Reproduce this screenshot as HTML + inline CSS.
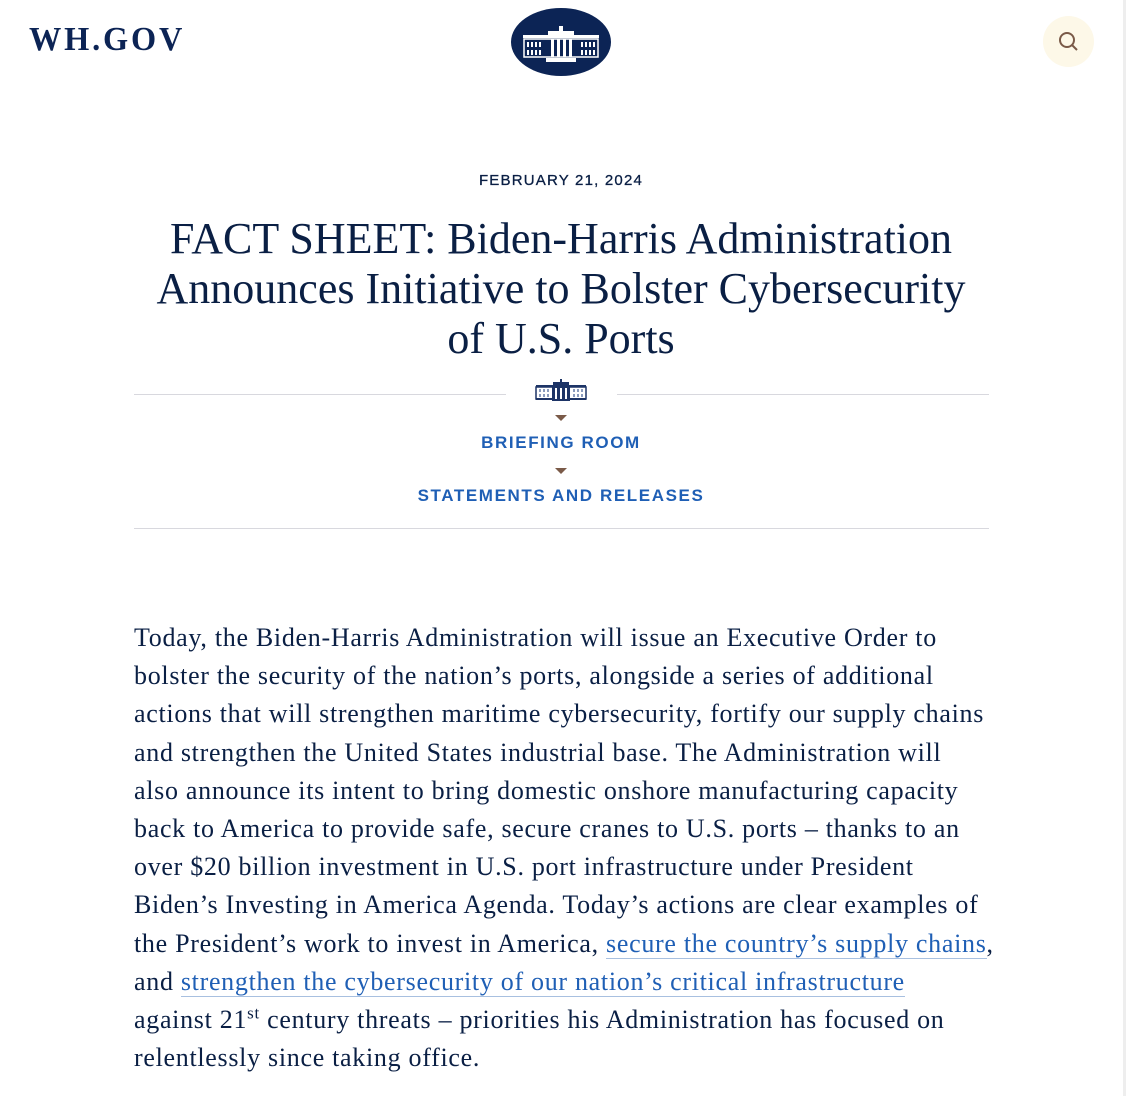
<!DOCTYPE html>
<html><head><meta charset="utf-8"><style>
body{margin:0;width:1126px;height:1096px;background:#fff;overflow:hidden;position:relative;font-family:"Liberation Serif",serif;color:#0a1f44}
.sb{position:absolute;right:0;top:0;width:3px;height:1096px;background:#eee}
.logo{position:absolute;left:29px;top:21px;font-size:34px;font-weight:bold;letter-spacing:3px;color:#0c2455;transform:scaleX(0.95);transform-origin:left}
.seal{position:absolute;left:511px;top:8px;width:100px;height:68px;border-radius:50%;background:#0c2455}
.search{position:absolute;left:1043px;top:16px;width:51px;height:51px;border-radius:50%;background:#fdf8e8}
.date{position:absolute;top:172px;left:0;width:1122px;text-align:center;font-family:"Liberation Sans",sans-serif;font-size:15px;letter-spacing:1.2px;color:#0a1f44;-webkit-text-stroke:.3px #0a1f44}
h1{position:absolute;top:214px;left:60px;width:1002px;margin:0;text-align:center;font-weight:normal;font-size:44px;line-height:50px;color:#0a1f44}
.line{position:absolute;height:1px;background:#d8d8de}
.tri{position:absolute;left:555px;width:0;height:0;border-left:6px solid transparent;border-right:6px solid transparent;border-top:6px solid #7a5a48}
.cat{position:absolute;left:0;width:1122px;text-align:center;font-family:"Liberation Sans",sans-serif;font-size:17px;font-weight:bold;letter-spacing:1.6px;color:#1f5fb5}
.body{position:absolute;left:134px;top:619px;font-size:26px;line-height:38.2px;letter-spacing:.7px;color:#0a1f44;white-space:nowrap}
a{color:#1f5fb5;text-decoration:none;border-bottom:1px solid #a8c0e0}
sup{font-size:17px;line-height:0}
</style></head><body>
<div class="sb"></div>
<div class="logo">WH.GOV</div>
<div class="seal"><svg width="100" height="68" viewBox="0 0 100 68"><g fill="#fff"><rect x="12" y="27" width="76" height="3"/><rect x="13" y="31" width="74" height="18" fill="none" stroke="#fff" stroke-width="1.5"/><rect x="37" y="23" width="26" height="6"/><rect x="48" y="18" width="4" height="6"/><rect x="35" y="50" width="30" height="4"/><g fill="#fff"><rect x="16" y="34" width="2" height="5"/><rect x="20" y="34" width="2" height="5"/><rect x="24" y="34" width="2" height="5"/><rect x="28" y="34" width="2" height="5"/><rect x="16" y="42" width="2" height="5"/><rect x="20" y="42" width="2" height="5"/><rect x="24" y="42" width="2" height="5"/><rect x="28" y="42" width="2" height="5"/><rect x="70" y="34" width="2" height="5"/><rect x="74" y="34" width="2" height="5"/><rect x="78" y="34" width="2" height="5"/><rect x="82" y="34" width="2" height="5"/><rect x="70" y="42" width="2" height="5"/><rect x="74" y="42" width="2" height="5"/><rect x="78" y="42" width="2" height="5"/><rect x="82" y="42" width="2" height="5"/><rect x="40" y="31" width="3" height="18"/><rect x="46" y="31" width="3" height="18"/><rect x="52" y="31" width="3" height="18"/><rect x="58" y="31" width="3" height="18"/></g></g></svg></div>
<div class="search"><svg width="51" height="51" viewBox="0 0 51 51"><circle cx="24" cy="24" r="7" fill="none" stroke="#7a5a48" stroke-width="2"/><line x1="29" y1="29" x2="34" y2="34" stroke="#7a5a48" stroke-width="2"/></svg></div>
<div class="date">FEBRUARY 21, 2024</div>
<h1>FACT SHEET: Biden-Harris Administration<br>Announces Initiative to Bolster Cybersecurity<br>of U.S. Ports</h1>
<div class="line" style="left:134px;width:372px;top:394px"></div>
<div class="line" style="left:617px;width:372px;top:394px"></div>
<svg style="position:absolute;left:535px;top:378px" width="52" height="24" viewBox="0 0 52 24"><g fill="#1d3466"><rect x="1" y="7" width="50" height="2"/><rect x="1" y="9" width="50" height="12" fill="none" stroke="#1d3466" stroke-width="1.5"/><rect x="18" y="4" width="16" height="4"/><rect x="25" y="1" width="2" height="4"/><rect x="17" y="9" width="18" height="14"/><rect x="1" y="20" width="50" height="2"/></g><g fill="#8a9bbd"><rect x="4" y="11" width="2" height="3"/><rect x="8" y="11" width="2" height="3"/><rect x="12" y="11" width="2" height="3"/><rect x="4" y="16" width="2" height="3"/><rect x="8" y="16" width="2" height="3"/><rect x="12" y="16" width="2" height="3"/><rect x="38" y="11" width="2" height="3"/><rect x="42" y="11" width="2" height="3"/><rect x="46" y="11" width="2" height="3"/><rect x="38" y="16" width="2" height="3"/><rect x="42" y="16" width="2" height="3"/><rect x="46" y="16" width="2" height="3"/></g><g fill="#fff"><rect x="20" y="10" width="2" height="11"/><rect x="25" y="10" width="2" height="11"/><rect x="30" y="10" width="2" height="11"/></g></svg>
<div class="tri" style="top:415px"></div>
<div class="cat" style="top:433px">BRIEFING ROOM</div>
<div class="tri" style="top:468px"></div>
<div class="cat" style="top:486px">STATEMENTS AND RELEASES</div>
<div class="line" style="left:134px;width:855px;top:528px"></div>
<div class="body">Today, the Biden-Harris Administration will issue an Executive Order to<br>bolster the security of the nation’s ports, alongside a series of additional<br>actions that will strengthen maritime cybersecurity, fortify our supply chains<br>and strengthen the United States industrial base. The Administration will<br>also announce its intent to bring domestic onshore manufacturing capacity<br>back to America to provide safe, secure cranes to U.S. ports – thanks to an<br>over $20 billion investment in U.S. port infrastructure under President<br>Biden’s Investing in America Agenda. Today’s actions are clear examples of<br>the President’s work to invest in America, <a>secure the country’s supply chains</a>,<br>and <a>strengthen the cybersecurity of our nation’s critical infrastructure</a><br>against 21<sup>st</sup> century threats – priorities his Administration has focused on<br>relentlessly since taking office.</div>
</body></html>
